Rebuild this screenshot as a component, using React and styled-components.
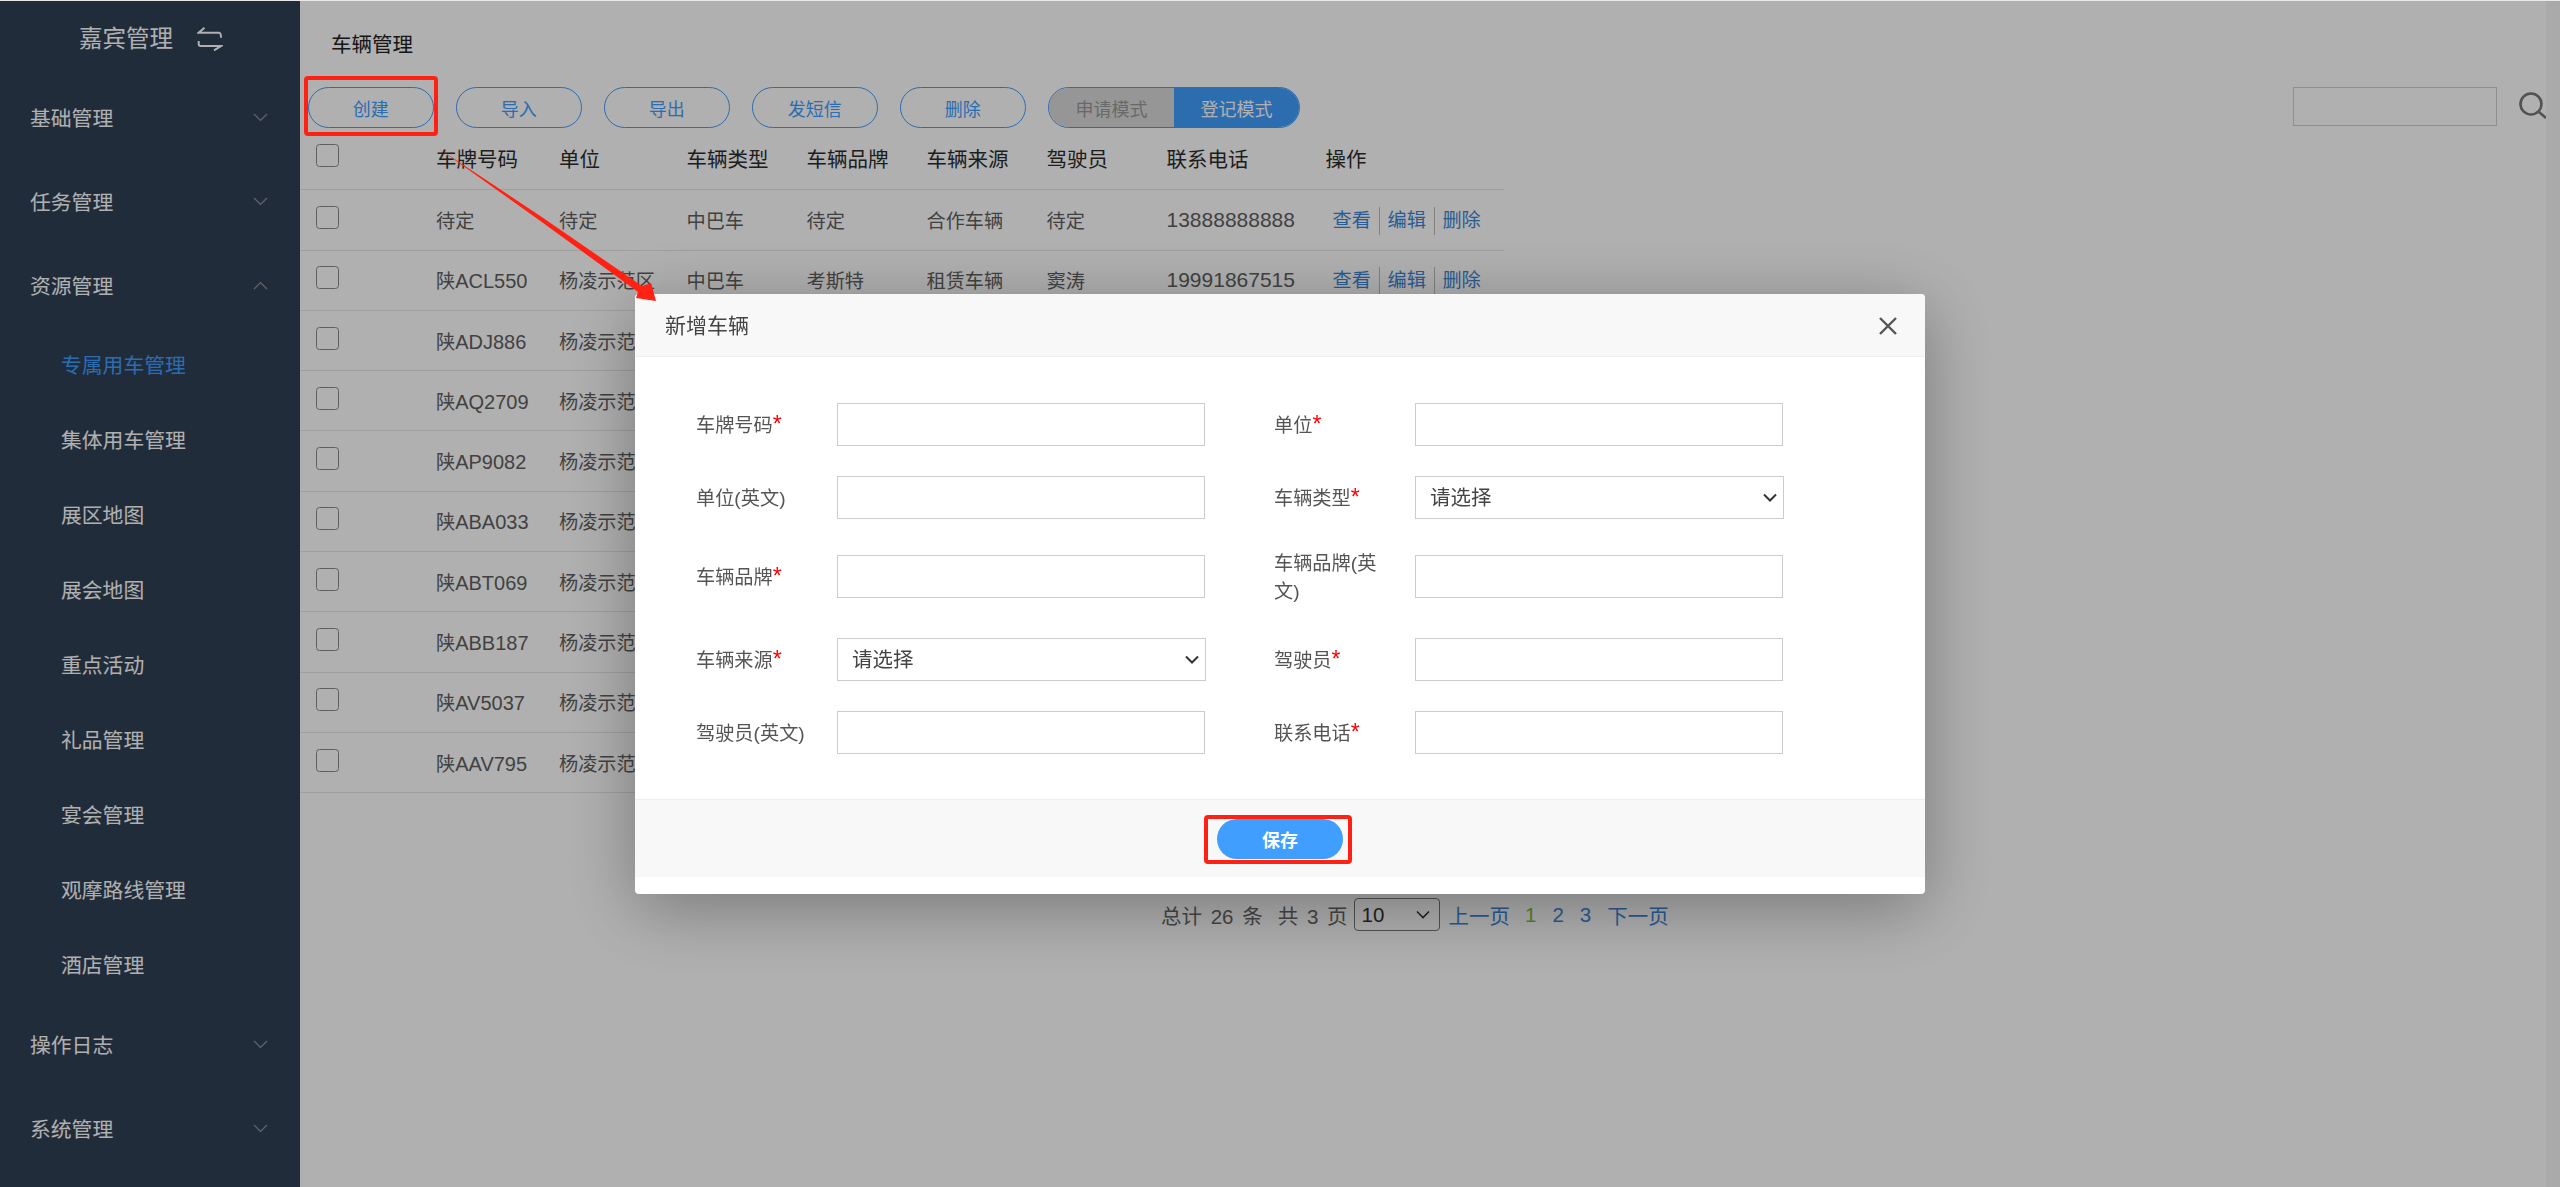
import React from 'react';
import styled, { createGlobalStyle } from 'styled-components';

const GlobalStyle = createGlobalStyle`
  html, body { margin: 0; padding: 0; height: 100%; background: #e8e8e8; overflow: hidden; }
  body { font-family: "Liberation Sans", "Noto Sans CJK SC", sans-serif; }
  * { box-sizing: border-box; }
`;

const primary = '#409eff';

const selectArrow = (color, width) =>
  `url("data:image/svg+xml,%3Csvg xmlns='http://www.w3.org/2000/svg' width='14' height='9' fill='none' stroke='${color}' stroke-width='${width}'%3E%3Cpath d='M1 1.500l6 6 6-6'/%3E%3C/svg%3E")`;

const Page = styled.div`
  display: flex;
  height: 1187px;
  padding-top: 1px;
`;

const Sidebar = styled.aside`
  width: 300px;
  flex: none;
  background: #304156;
  color: #fff;
`;

const Brand = styled.div`
  height: 75px;
  padding-left: 79px;
  display: flex;
  align-items: center;
  gap: 24px;
  font-size: 23.5px;
  line-height: 30px;
`;

const MenuItem = styled.div`
  height: 84px;
  padding: 2px 32px 0 30px;
  display: flex;
  align-items: center;
  justify-content: space-between;
  font-size: 20.8px;
  line-height: 30px;
`;

const SubItem = styled.div`
  height: 75px;
  padding-left: 61px;
  display: flex;
  align-items: center;
  font-size: 20.8px;
  line-height: 30px;
  color: ${p => (p.$active ? primary : '#fff')};
`;

const Chevron = styled.svg`
  width: 15px;
  height: 9px;
  fill: none;
  stroke: #909399;
  stroke-width: 1.2;
  margin-top: -4px;
`;

const Main = styled.main`
  flex: 1;
  min-width: 0;
  background: #fff;
  position: relative;
`;

const Gutter = styled.div`
  width: 14px;
  flex: none;
  background: #f7f7f7;
`;

const PageTitle = styled.div`
  height: 84px;
  padding-left: 31px;
  display: flex;
  align-items: center;
  font-size: 20.5px;
  color: #222;
`;

const Toolbar = styled.div`
  margin: 2px 0 0 8px;
  height: 41px;
  display: flex;
  align-items: center;
  gap: 22.5px;
`;

const ButtonWrap = styled.div`
  position: relative;
  display: flex;
`;

const OutlineButton = styled.button`
  width: 125.5px;
  height: 41px;
  padding: 0;
  border: 1px solid ${primary};
  border-radius: 21px;
  background: transparent;
  color: ${primary};
  font: inherit;
  font-size: 18px;
`;

const ModeSwitch = styled.div`
  display: flex;
  width: 252px;
  height: 41px;
  border: 1px solid ${primary};
  border-radius: 21px;
  overflow: hidden;
  font-size: 18px;
`;

const Mode = styled.div`
  flex: 1;
  display: flex;
  align-items: center;
  justify-content: center;
  background: ${p => (p.$on ? primary : '#d9d9d9')};
  color: ${p => (p.$on ? '#fff' : '#999')};
`;

const SearchBox = styled.div`
  margin-left: auto;
  margin-bottom: 2px;
  display: flex;
  align-items: center;
  gap: 22px;
`;

const SearchInput = styled.input`
  width: 204px;
  height: 39px;
  border: 1px solid #d0d0d0;
  background: transparent;
  outline: none;
`;

const SearchIcon = styled.svg`
  width: 27px;
  height: 27px;
  fill: none;
  stroke: #777;
  stroke-width: 2.6;
  margin-top: -2px;
  display: block;
`;

const Table = styled.div`
  width: 1204px;
  margin-top: 2px;
`;

const columns = '136px 123px 127.5px 120px 120px 120px 120px 159px 1fr';

const HeadRow = styled.div`
  display: grid;
  grid-template-columns: ${columns};
  align-items: center;
  height: 60.3px;
  padding-bottom: 4px;
  border-bottom: 1px solid #e6e6e6;
  font-size: 20.5px;
  color: #2c2c2c;
`;

const Row = styled(HeadRow)`
  padding-bottom: 0;
  font-size: 19.2px;
  color: #5f5f5f;
`;

const Check = styled.span`
  display: block;
  width: 23px;
  height: 23px;
  margin: 0 0 5px 16px;
  border: 1.5px solid #8a8a8a;
  border-radius: 3.5px;
`;

const Plate = styled.span`
  white-space: nowrap;
  & b { font-weight: 400; font-size: 20px; }
`;

const Phone = styled.span`
  font-size: 21px;
`;

const Actions = styled.div`
  display: flex;
  align-items: center;
  margin: 2px 0 0 7px;
`;

const ActionLink = styled.a`
  color: #3b86d6;
  height: 28px;
  line-height: 28px;
  padding-right: 8px;
  margin-right: 7.6px;
  border-right: 1px solid #bbb;
  white-space: nowrap;
  &:last-child { border-right: none; }
`;

const Pager = styled.div`
  margin: 105px 0 0 861px;
  display: flex;
  align-items: center;
  height: 33px;
  font-size: 20.5px;
  color: #666;
  word-spacing: 3px;
  white-space: nowrap;
`;

const PagerText = styled.span`
  margin-right: ${p => p.$gap || 0}px;
`;

const PageSize = styled.select`
  appearance: none;
  width: 86px;
  height: 33px;
  margin-right: 9px;
  padding: 0 0 0 7px;
  font-family: inherit;
  font-size: 20.5px;
  color: #333;
  background: ${selectArrow('%23333', 1.6)} no-repeat right 9px center;
  border: 1px solid #777;
  border-radius: 4px;
`;

const PagerLink = styled.a`
  color: ${p => (p.$current ? '#7fbf3f' : '#3b86d6')};
  margin-right: ${p => p.$gap || 0}px;
`;

const Backdrop = styled.div`
  position: fixed;
  inset: 1px 0 0 0;
  z-index: 40;
  background: rgba(0, 0, 0, 0.31);
  display: flex;
  justify-content: center;
  padding-top: 293px;
`;

const Modal = styled.div`
  width: 1290px;
  height: 600px;
  background: #fff;
  border-radius: 4px;
  box-shadow: 0 14px 70px rgba(0, 0, 0, 0.32);
  overflow: hidden;
  position: relative;
`;

const ModalHeader = styled.div`
  height: 63px;
  padding: 0 20px 2px 30px;
  display: flex;
  align-items: center;
  justify-content: space-between;
  background: #f8f8f8;
  border-bottom: 1px solid #eee;
  font-size: 21px;
  color: #444;
`;

const CloseIcon = styled.svg`
  width: 18px;
  height: 18px;
  stroke: #555;
  stroke-width: 2.4;
  fill: none;
  margin: 4px 8px 0 0;
`;

const Form = styled.div`
  height: 442px;
  padding: 46px 0 0 61px;
  display: grid;
  grid-template-columns: 578px 1fr;
  grid-template-rows: 43px 43px 59px 43px 43px;
  row-gap: 30px;
`;

const Field = styled.div`
  display: flex;
  align-items: center;
  height: ${p => (p.$tall ? '55px' : 'auto')};
`;

const Label = styled.label`
  width: 141px;
  padding: 2px 20px 0 0;
  flex: none;
  font-size: 19.2px;
  line-height: 28px;
  color: #555;
`;

const Star = styled.span`
  color: #f00;
  font-size: 23px;
  line-height: 0;
`;

const TextInput = styled.input`
  width: 368px;
  height: 43px;
  border: 1px solid #ccc;
  background: #fff;
  outline: none;
`;

const SelectInput = styled.select`
  appearance: none;
  width: 369px;
  height: 43px;
  padding: 0 14px;
  border: 1px solid #ccc;
  background: #fff ${selectArrow('%23333', 2)} no-repeat right 6px center;
  font-family: inherit;
  font-size: 20.5px;
  color: #444;
  border-radius: 0;
`;

const ModalFooter = styled.div`
  height: 78px;
  display: flex;
  align-items: center;
  justify-content: center;
  background: #f8f8f8;
  border-top: 1px solid #eee;
`;

const SaveButton = styled.button`
  width: 126px;
  height: 40px;
  border: none;
  border-radius: 20px;
  background: ${primary};
  color: #fff;
  font: inherit;
  font-size: 18px;
  font-weight: 700;
`;

const RedFrame = styled.div`
  position: absolute;
  top: ${p => p.$top}px;
  right: ${p => p.$right}px;
  bottom: ${p => p.$bottom}px;
  left: ${p => p.$left}px;
  border: 4.5px solid #ff2214;
  border-radius: 4px;
  z-index: 60;
  pointer-events: none;
`;

const ArrowLayer = styled.svg`
  position: fixed;
  top: 0;
  left: 0;
  width: 2560px;
  height: 1187px;
  z-index: 60;
  pointer-events: none;
`;

const Down = () => (
  <Chevron viewBox="0 0 15 9"><path d="M1 1l6.5 6.5L14 1" /></Chevron>
);
const Up = () => (
  <Chevron viewBox="0 0 15 9"><path d="M1 8l6.5-6.5L14 8" /></Chevron>
);

const subMenu = ['专属用车管理', '集体用车管理', '展区地图', '展会地图', '重点活动', '礼品管理', '宴会管理', '观摩路线管理', '酒店管理'];

const rows = [
  ['', '待定', '待定', '中巴车', '待定', '合作车辆', '待定', '13888888888'],
  ['ACL550', '', '杨凌示范区', '中巴车', '考斯特', '租赁车辆', '窦涛', '19991867515'],
  ['ADJ886'], ['AQ2709'], ['AP9082'], ['ABA033'], ['ABT069'], ['ABB187'], ['AV5037'], ['AAV795'],
];

const App = () => (
  <>
    <GlobalStyle />
    <Page>
      <Sidebar>
        <Brand>
          嘉宾管理
          <svg width="26" height="26" viewBox="0 0 26 26" fill="none" stroke="#fff" strokeWidth="2">
            <path d="M7.500 1.700L1.700 6.700H22c1.600 0 2 1 2 5" />
            <path d="M1.700 15v3c0 1.600.6 2 2 2H24l-7 4.300" />
          </svg>
        </Brand>
        <MenuItem>基础管理<Down /></MenuItem>
        <MenuItem>任务管理<Down /></MenuItem>
        <MenuItem>资源管理<Up /></MenuItem>
        {subMenu.map((name, i) => (
          <SubItem key={name} $active={i === 0}>{name}</SubItem>
        ))}
        <MenuItem>操作日志<Down /></MenuItem>
        <MenuItem>系统管理<Down /></MenuItem>
      </Sidebar>
      <Main>
        <PageTitle>车辆管理</PageTitle>
        <Toolbar>
          <ButtonWrap>
            <OutlineButton>创建</OutlineButton>
            <RedFrame $top={-11} $right={-4} $bottom={-8} $left={-4.5} />
          </ButtonWrap>
          <OutlineButton>导入</OutlineButton>
          <OutlineButton>导出</OutlineButton>
          <OutlineButton>发短信</OutlineButton>
          <OutlineButton>删除</OutlineButton>
          <ModeSwitch>
            <Mode>申请模式</Mode>
            <Mode $on>登记模式</Mode>
          </ModeSwitch>
          <SearchBox>
            <SearchInput />
            <SearchIcon viewBox="0 0 27 27">
              <circle cx="12" cy="12" r="10.500" />
              <path d="M20 20l7 6" />
            </SearchIcon>
          </SearchBox>
        </Toolbar>
        <Table>
          <HeadRow>
            <Check />
            <span>车牌号码</span>
            <span>单位</span>
            <span>车辆类型</span>
            <span>车辆品牌</span>
            <span>车辆来源</span>
            <span>驾驶员</span>
            <span>联系电话</span>
            <span>操作</span>
          </HeadRow>
          {rows.map(([plate, plateText, unit, type, brand, source, driver, phone]) => (
            <Row key={plate || plateText}>
              <Check />
              <Plate>{plateText || <>陕<b>{plate}</b></>}</Plate>
              <span>{unit || '杨凌示范区'}</span>
              <span>{type}</span>
              <span>{brand}</span>
              <span>{source}</span>
              <span>{driver}</span>
              <Phone>{phone}</Phone>
              {phone && (
                <Actions>
                  <ActionLink>查看</ActionLink>
                  <ActionLink>编辑</ActionLink>
                  <ActionLink>删除</ActionLink>
                </Actions>
              )}
            </Row>
          ))}
        </Table>
        <Pager>
          <PagerText $gap={15}>总计 26 条</PagerText>
          <PagerText $gap={6}>共 3 页</PagerText>
          <PageSize defaultValue="10">
            <option>10</option>
            <option>20</option>
          </PageSize>
          <PagerLink $gap={15}>上一页</PagerLink>
          <PagerLink $current $gap={16}>1</PagerLink>
          <PagerLink $gap={16}>2</PagerLink>
          <PagerLink $gap={16}>3</PagerLink>
          <PagerLink>下一页</PagerLink>
        </Pager>
      </Main>
      <Gutter />
    </Page>
    <Backdrop>
      <Modal>
        <ModalHeader>
          新增车辆
          <CloseIcon viewBox="0 0 18 18"><path d="M1 1l16 16M17 1L1 17" /></CloseIcon>
        </ModalHeader>
        <Form>
          <Field><Label>车牌号码<Star>*</Star></Label><TextInput /></Field>
          <Field><Label>单位<Star>*</Star></Label><TextInput /></Field>
          <Field><Label>单位(英文)</Label><TextInput /></Field>
          <Field>
            <Label>车辆类型<Star>*</Star></Label>
            <SelectInput defaultValue=""><option value="">请选择</option></SelectInput>
          </Field>
          <Field $tall><Label>车辆品牌<Star>*</Star></Label><TextInput /></Field>
          <Field $tall><Label>车辆品牌(英文)</Label><TextInput /></Field>
          <Field>
            <Label>车辆来源<Star>*</Star></Label>
            <SelectInput defaultValue=""><option value="">请选择</option></SelectInput>
          </Field>
          <Field><Label>驾驶员<Star>*</Star></Label><TextInput /></Field>
          <Field><Label>驾驶员(英文)</Label><TextInput /></Field>
          <Field><Label>联系电话<Star>*</Star></Label><TextInput /></Field>
        </Form>
        <ModalFooter>
          <ButtonWrap>
            <SaveButton>保存</SaveButton>
            <RedFrame $top={-4} $right={-8.500} $bottom={-5} $left={-13} />
          </ButtonWrap>
        </ModalFooter>
      </Modal>
    </Backdrop>
    <ArrowLayer viewBox="0 0 2560 1187">
      <polygon fill="#ff2214" points="438,148 541,216.500 642,286 651,283 656,301 636,298 638,292 539,220" />
    </ArrowLayer>
  </>
);

export default App;
